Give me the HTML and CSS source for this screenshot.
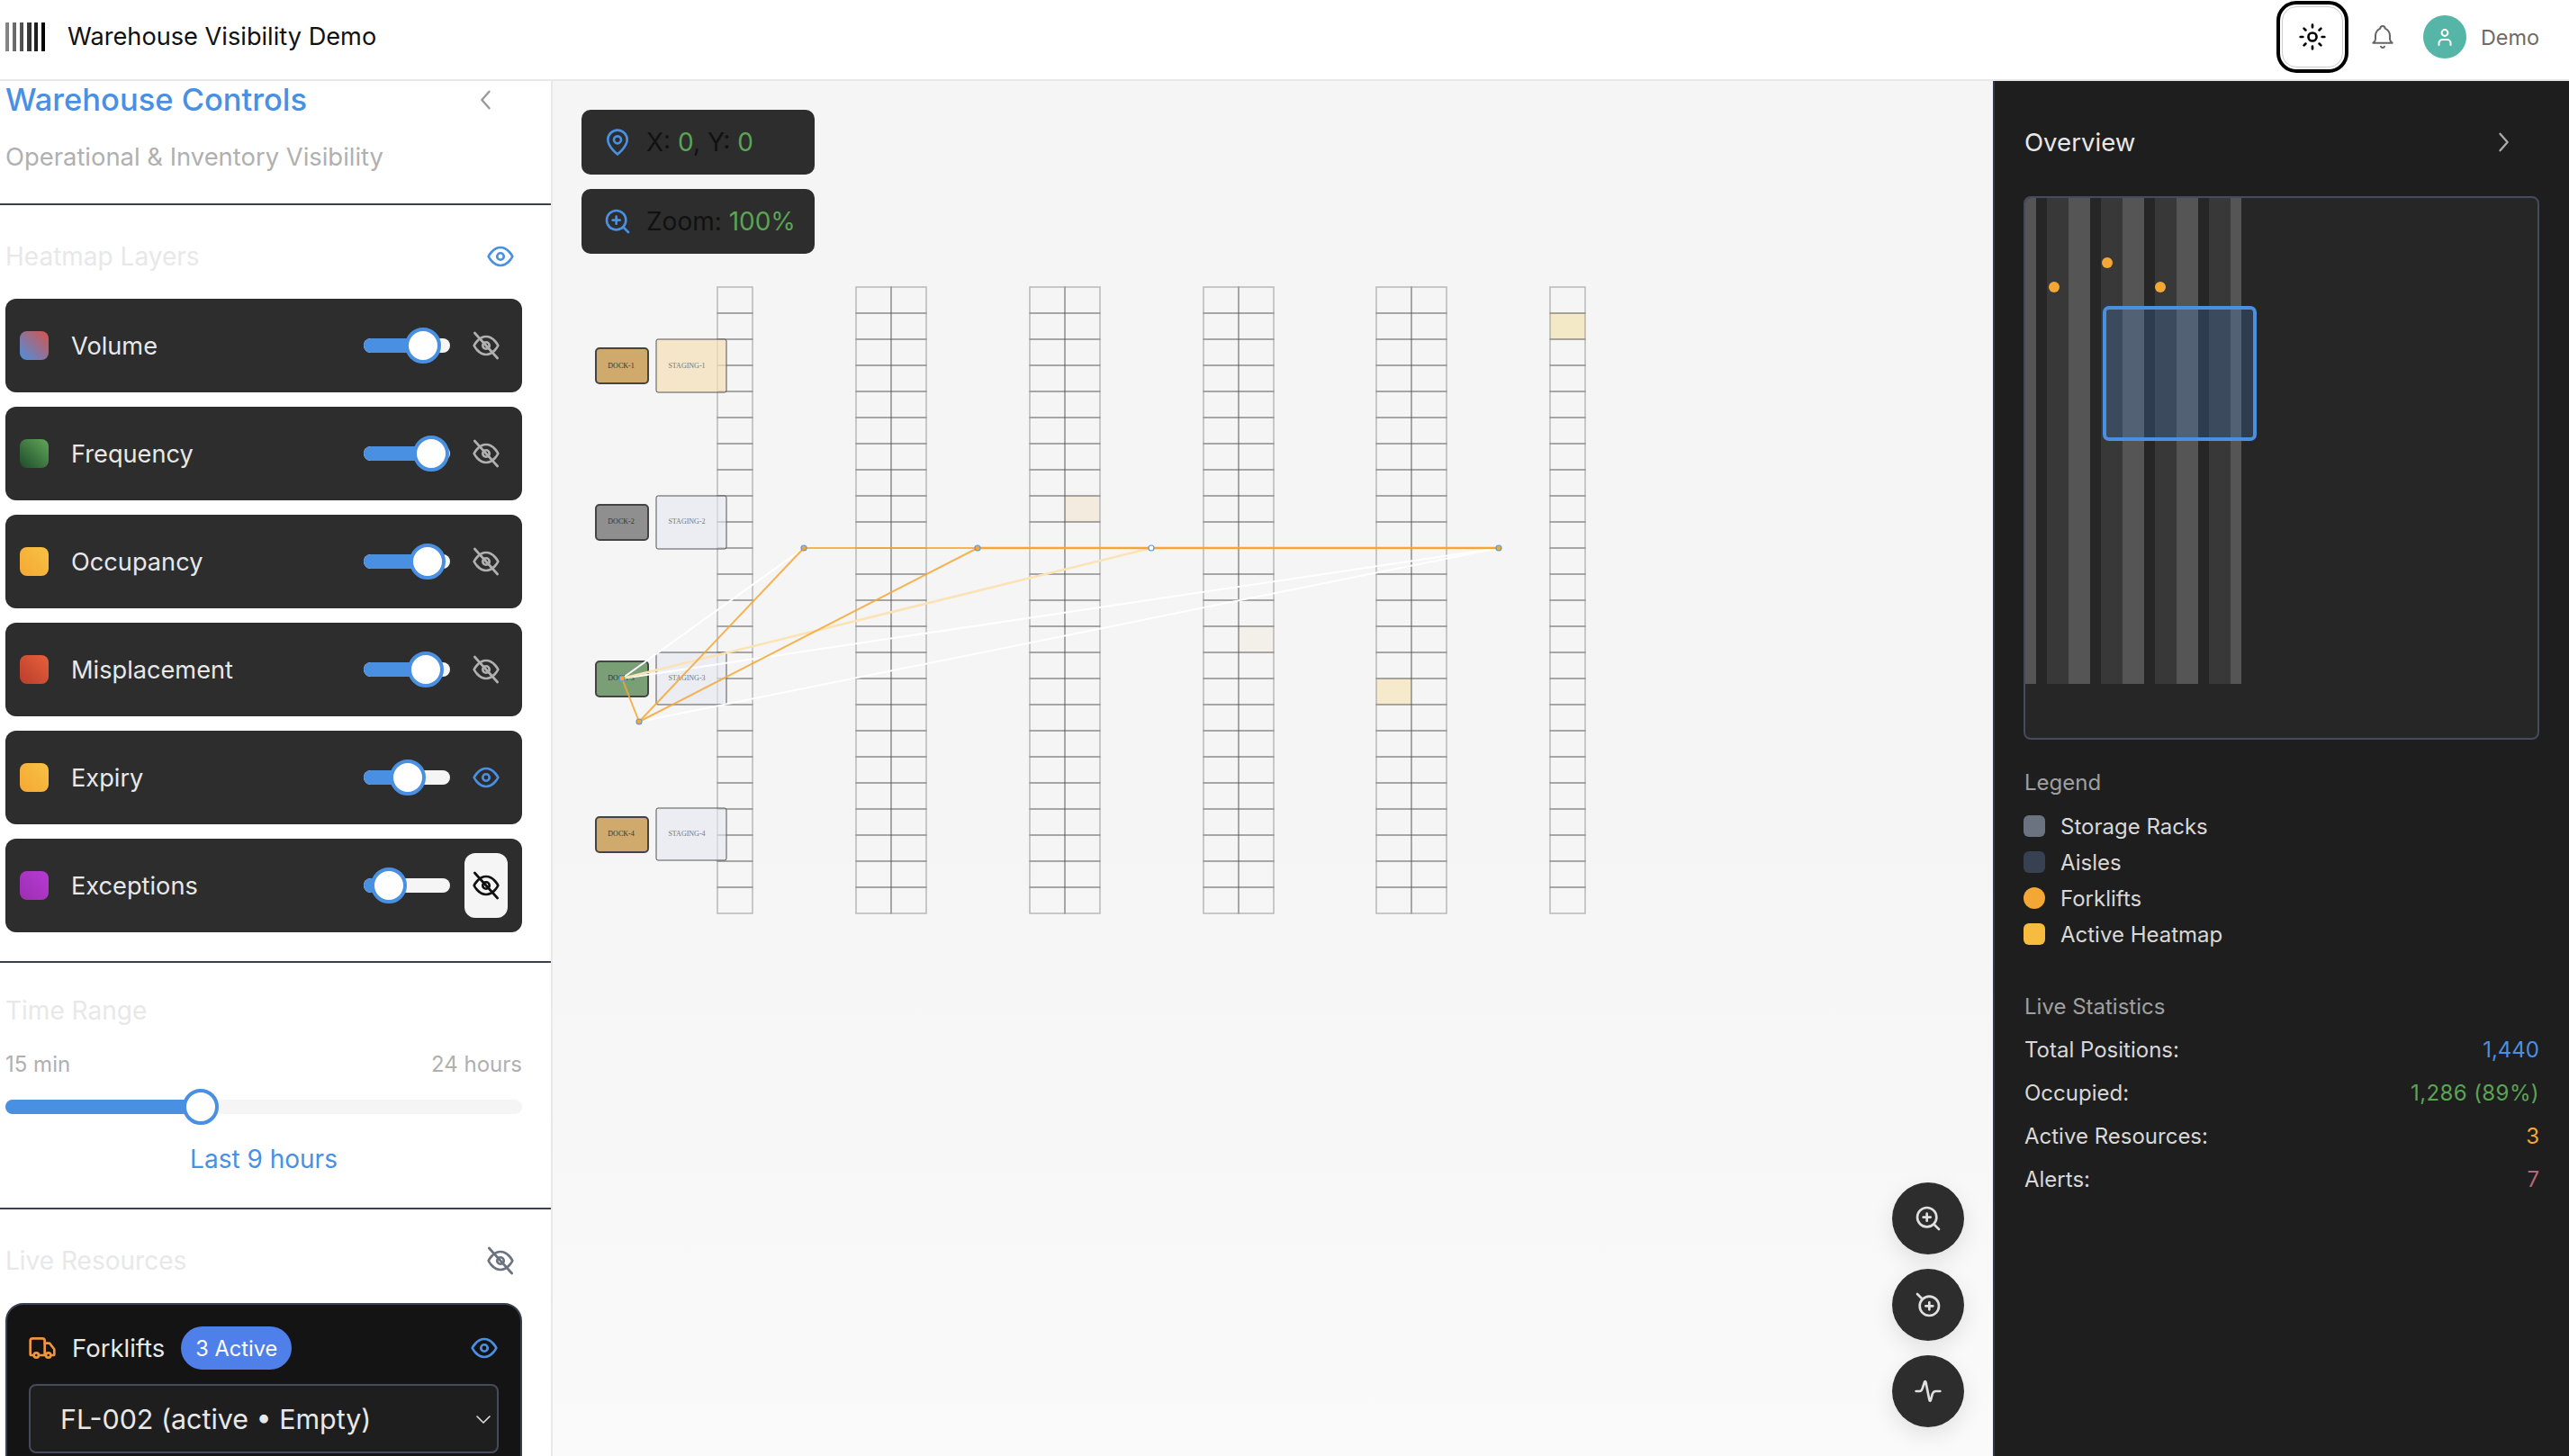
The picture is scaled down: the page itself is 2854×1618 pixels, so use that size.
FILE: index.html
```html
<!DOCTYPE html>
<html lang="en">
  <head>
    <meta charset="UTF-8" />
    <title>Warehouse Visibility Demo</title>
    <link rel="stylesheet" href="styles.css">
  </head>
  <body>
    <svg class="defs" width="0" height="0">
      <defs>
        <g id="eye"><path d="M2 12s3.6-7.5 10-7.5S22 12 22 12s-3.6 7.5-10 7.5S2 12 2 12z"/><circle cx="12" cy="12" r="2.8"/></g>
        <g id="eye-off"><path d="M2 12s3.6-7.5 10-7.5S22 12 22 12s-3.6 7.5-10 7.5S2 12 2 12z"/><circle cx="12" cy="12" r="2.8"/><path d="M2.5 1.5l19 21"/></g>
        <g id="zoom-in"><circle cx="11" cy="11" r="8"/><path d="M21 21l-4.35-4.35M11 8v6M8 11h6"/></g>
      </defs>
    </svg>

    <header class="topbar">
      <svg class="logo" width="44" height="32" viewBox="0 0 44 32">
        <defs>
          <linearGradient id="bars"><stop offset="0" stop-color="#8a8a8a"/><stop offset="1" stop-color="#000"/></linearGradient>
        </defs>
        <path fill="url(#bars)" d="M0 0h4v32H0zM8 0h4v32H8zM16 0h4v32h-4zM24 0h5v32h-5zM32 0h4v32h-4zM40 0h4v32h-4z"/>
      </svg>
      <div class="app-title">Warehouse Visibility Demo</div>
      <div class="top-actions">
        <button class="theme-btn">
          <svg class="icon" viewBox="0 0 24 24"><circle cx="12" cy="12" r="3.4"/><path d="M12 2v2M12 20v2M4.93 4.93l1.41 1.41M17.66 17.66l1.41 1.41M2 12h2M20 12h2M6.34 17.66l-1.41 1.41M19.07 4.93l-1.41 1.41"/></svg>
        </button>
        <svg class="icon bell" viewBox="0 0 24 24"><path d="M10 5a2 2 0 1 1 4 0a7 7 0 0 1 4 6v3a4 4 0 0 0 2 3h-16a4 4 0 0 0 2 -3v-3a7 7 0 0 1 4 -6"/><path d="M10.5 20a1.6 1.6 0 0 0 3 0"/></svg>
        <div class="avatar">
          <svg class="icon" viewBox="0 0 24 24"><circle cx="12" cy="7.5" r="3.4"/><path d="M5.5 21v-2a4 4 0 0 1 4-4h5a4 4 0 0 1 4 4v2"/></svg>
        </div>
        <span class="user-name">Demo</span>
      </div>
    </header>

    <main class="layout">
      <aside class="sidebar">
        <div class="side-head">
          <div class="side-title-row">
            <h1 class="side-title">Warehouse Controls</h1>
            <svg class="icon collapse" viewBox="0 0 24 24"><path d="M15 4l-7 8 7 8"/></svg>
          </div>
          <p class="side-sub">Operational &amp; Inventory Visibility</p>
        </div>

        <section class="section layers">
          <div class="section-head">
            <h2>Heatmap Layers</h2>
            <svg class="icon blue" viewBox="0 0 24 24"><use href="#eye"/></svg>
          </div>
          <div class="layer-list">
            <div class="layer">
              <span class="swatch volume"></span><span class="layer-name">Volume</span>
              <div class="slider small"><div class="fill" style="width: 66px"><span class="thumb"></span></div></div>
              <span class="eye-btn"><svg class="icon muted" viewBox="0 0 24 24"><use href="#eye-off"/></svg></span>
            </div>
            <div class="layer">
              <span class="swatch frequency"></span><span class="layer-name">Frequency</span>
              <div class="slider small"><div class="fill" style="width: 75px"><span class="thumb"></span></div></div>
              <span class="eye-btn"><svg class="icon muted" viewBox="0 0 24 24"><use href="#eye-off"/></svg></span>
            </div>
            <div class="layer">
              <span class="swatch occupancy"></span><span class="layer-name">Occupancy</span>
              <div class="slider small"><div class="fill" style="width: 71px"><span class="thumb"></span></div></div>
              <span class="eye-btn"><svg class="icon muted" viewBox="0 0 24 24"><use href="#eye-off"/></svg></span>
            </div>
            <div class="layer">
              <span class="swatch misplacement"></span><span class="layer-name">Misplacement</span>
              <div class="slider small"><div class="fill" style="width: 69px"><span class="thumb"></span></div></div>
              <span class="eye-btn"><svg class="icon muted" viewBox="0 0 24 24"><use href="#eye-off"/></svg></span>
            </div>
            <div class="layer">
              <span class="swatch occupancy"></span><span class="layer-name">Expiry</span>
              <div class="slider small"><div class="fill" style="width: 49px"><span class="thumb"></span></div></div>
              <span class="eye-btn"><svg class="icon blue" viewBox="0 0 24 24"><use href="#eye"/></svg></span>
            </div>
            <div class="layer">
              <span class="swatch exceptions"></span><span class="layer-name">Exceptions</span>
              <div class="slider small"><div class="fill" style="width: 28px"><span class="thumb"></span></div></div>
              <span class="eye-btn hovered"><svg class="icon" viewBox="0 0 24 24"><use href="#eye-off"/></svg></span>
            </div>
          </div>
        </section>

        <section class="section time">
          <h2>Time Range</h2>
          <div class="range-labels"><span>15 min</span><span>24 hours</span></div>
          <div class="slider"><div class="fill" style="width: 217px"><span class="thumb"></span></div></div>
          <div class="range-value">Last 9 hours</div>
        </section>

        <section class="section live">
          <div class="section-head">
            <h2>Live Resources</h2>
            <svg class="icon grey" viewBox="0 0 24 24"><use href="#eye-off"/></svg>
          </div>
          <div class="resource">
            <div class="resource-head">
              <svg class="icon truck" viewBox="0 0 24 24"><path d="M14 18V6a2 2 0 0 0-2-2H4a2 2 0 0 0-2 2v11a1 1 0 0 0 1 1h2"/><path d="M15 18H9"/><path d="M19 18h2a1 1 0 0 0 1-1v-3.65a1 1 0 0 0-.22-.624l-3.48-4.35A1 1 0 0 0 17.52 8H14"/><circle cx="17" cy="18" r="2"/><circle cx="7" cy="18" r="2"/></svg>
              <span class="resource-name">Forklifts</span>
              <span class="badge">3 Active</span>
              <svg class="icon blue resource-eye" viewBox="0 0 24 24"><use href="#eye"/></svg>
            </div>
            <div class="select">
              <span>FL-002 (active • Empty)</span>
              <svg class="icon chevron" viewBox="0 0 24 24"><path d="M5 9l7 7 7-7"/></svg>
            </div>
          </div>
        </section>
      </aside>

      <div class="canvas">
        <svg class="plan" width="1600" height="1528" viewBox="614 90 1600 1528">
          <defs>
            <rect id="cell" width="39" height="29"/>
            <g id="cells4"><use href="#cell"/><use href="#cell" y="29"/><use href="#cell" y="58"/><use href="#cell" y="87"/></g>
            <g id="col"><use href="#cells4"/><use href="#cells4" y="116"/><use href="#cells4" y="232"/><use href="#cells4" y="348"/><use href="#cells4" y="464"/><use href="#cells4" y="580"/></g>
          </defs>

          <g class="heat">
            <rect x="1183" y="551" width="39" height="29" fill="#f3ebdd"/>
            <rect x="1376" y="696" width="39" height="29" fill="#f3efe9"/>
            <rect x="1529" y="754" width="39" height="29" fill="#f5ebcc"/>
            <rect x="1722" y="348" width="39" height="29" fill="#f3e9c6"/>
          </g>

          <g class="racks">
            <use href="#col" x="797" y="319"/>
            <use href="#col" x="951" y="319"/><use href="#col" x="990" y="319"/>
            <use href="#col" x="1144" y="319"/><use href="#col" x="1183" y="319"/>
            <use href="#col" x="1337" y="319"/><use href="#col" x="1376" y="319"/>
            <use href="#col" x="1529" y="319"/><use href="#col" x="1568" y="319"/>
            <use href="#col" x="1722" y="319"/>
          </g>

          <g class="stagings">
            <rect x="729" y="377" width="78" height="59" rx="2"/>
            <rect x="729" y="551" width="78" height="59" rx="2"/>
            <rect x="729" y="725" width="78" height="58" rx="2"/>
            <rect x="729" y="898" width="78" height="58" rx="2"/>
          </g>
          <g class="staging-text">
            <text x="763" y="409">STAGING-1</text>
            <text x="763" y="582">STAGING-2</text>
            <text x="763" y="756">STAGING-3</text>
            <text x="763" y="929">STAGING-4</text>
          </g>
          <g class="docks">
            <rect x="662" y="387" width="58" height="39" rx="4" fill="#d0a96c"/>
            <rect x="662" y="561" width="58" height="39" rx="4" fill="#8f8f8f"/>
            <rect x="662" y="735" width="58" height="39" rx="4" fill="#7a9f76"/>
            <rect x="662" y="908" width="58" height="39" rx="4" fill="#d0a96c"/>
          </g>
          <g class="dock-text">
            <text x="690" y="409">DOCK-1</text>
            <text x="690" y="582">DOCK-2</text>
            <text x="690" y="756">DOCK-3</text>
            <text x="690" y="929">DOCK-4</text>
          </g>

          <g class="routes-white">
            <path d="M691 754L893 609"/>
            <path d="M691 754L1665 609"/>
            <path d="M710 802L1665 609"/>
          </g>
          <path class="route-cream" d="M691 754L1279 609"/>
          <g class="routes-orange">
            <path d="M691 754L710 802"/>
            <path d="M710 802L893 609"/>
            <path d="M710 802L1086 609"/>
            <path d="M893 609H1086"/>
            <path class="thick" d="M1086 609H1665"/>
          </g>
          <g class="route-nodes">
            <circle cx="691" cy="754" r="3"/>
            <circle cx="710" cy="802" r="3"/>
            <circle cx="893" cy="609" r="3"/>
            <circle cx="1086" cy="609" r="3"/>
            <circle class="empty" cx="1279" cy="609" r="3"/>
            <circle cx="1665" cy="609" r="3"/>
          </g>
        </svg>

        <div class="readouts">
          <div class="readout">
            <svg class="icon blue" viewBox="0 0 24 24"><path d="M20 10c0 6-8 12-8 12s-8-6-8-12a8 8 0 0 1 16 0Z"/><circle cx="12" cy="10" r="3"/></svg>
            <span>X: <b>0</b>, Y: <b>0</b></span>
          </div>
          <div class="readout">
            <svg class="icon blue" viewBox="0 0 24 24"><use href="#zoom-in"/></svg>
            <span>Zoom: <b>100%</b></span>
          </div>
        </div>

        <div class="fabs">
          <button class="fab"><svg class="icon" viewBox="0 0 24 24"><use href="#zoom-in"/></svg></button>
          <button class="fab"><svg class="icon" viewBox="0 0 24 24"><circle cx="13" cy="13" r="8"/><path d="M3 3l4.35 4.35M13 10v6M10 13h6"/></svg></button>
          <button class="fab"><svg class="icon" viewBox="0 0 24 24"><path d="M2 12h3c1.5 0 2-1 2.5-3L9 4.5c.2-.8.9-.8 1.1 0l3 15c.2.8.9.8 1.1 0l1.3-5C16 13 17 12 18.5 12H22"/></svg></button>
        </div>
      </div>

      <aside class="overview">
        <div class="overview-head">
          <h2>Overview</h2>
          <svg class="icon expand" viewBox="0 0 24 24"><path d="M9 4l7 8-7 8"/></svg>
        </div>
        <div class="minimap">
          <svg width="569" height="600" viewBox="2250 220 569 600">
            <g fill="#555">
              <rect x="2250" y="220" width="12" height="540"/>
              <rect x="2298" y="220" width="24" height="540"/>
              <rect x="2358" y="220" width="24" height="540"/>
              <rect x="2418" y="220" width="24" height="540"/>
              <rect x="2478" y="220" width="12" height="540"/>
            </g>
            <g fill="#383838">
              <rect x="2274" y="220" width="24" height="540"/>
              <rect x="2334" y="220" width="24" height="540"/>
              <rect x="2394" y="220" width="24" height="540"/>
              <rect x="2454" y="220" width="24" height="540"/>
            </g>
            <g fill="#f5a735">
              <circle cx="2282" cy="319" r="6"/>
              <circle cx="2341" cy="292" r="6"/>
              <circle cx="2400" cy="319" r="6"/>
            </g>
            <rect x="2338" y="342" width="167" height="146" rx="5" fill="#4a90e2" fill-opacity="0.22" stroke="#4a90e2" stroke-width="4"/>
          </svg>
        </div>

        <h3 class="panel-label">Legend</h3>
        <ul class="legend">
          <li><span class="key racks-key"></span>Storage Racks</li>
          <li><span class="key aisles-key"></span>Aisles</li>
          <li><span class="key forklift-key"></span>Forklifts</li>
          <li><span class="key heat-key"></span>Active Heatmap</li>
        </ul>

        <h3 class="panel-label stats-label">Live Statistics</h3>
        <ul class="stats">
          <li><span>Total Positions:</span><span class="v-blue">1,440</span></li>
          <li><span>Occupied:</span><span class="v-green">1,286 (89%)</span></li>
          <li><span>Active Resources:</span><span class="v-orange">3</span></li>
          <li><span>Alerts:</span><span class="v-red">7</span></li>
        </ul>
      </aside>
    </main>
  </body>
</html>
```

FILE: styles.css
```css
* {
  box-sizing: border-box;
}
html,
body {
  height: 100%;
  margin: 0;
  overflow: hidden;
}
body {
  background: #fff;
  color: #111;
  font-family: Inter, "Liberation Sans", sans-serif;
  display: flex;
  flex-direction: column;
}
h1,
h2,
h3,
p,
ul {
  margin: 0;
  padding: 0;
  font-weight: 400;
}
ul {
  list-style: none;
}
.defs {
  position: absolute;
}
.icon {
  width: 32px;
  height: 32px;
  flex: none;
  fill: none;
  stroke: currentColor;
  stroke-width: 2;
  stroke-linecap: round;
  stroke-linejoin: round;
}
.blue {
  color: #4a90e2;
}
.muted {
  color: #b0b0b0;
}
.grey {
  color: #6b7280;
}

/* top bar */
.topbar {
  height: 90px;
  flex: none;
  display: flex;
  align-items: center;
  padding: 0 33px 6px 6px;
  border-bottom: 2px solid #e8e8e8;
}
.logo {
  flex: none;
}
.app-title {
  margin-left: 25px;
  font-size: 27.2px;
  line-height: 40px;
}
.top-actions {
  margin-left: auto;
  display: flex;
  align-items: center;
}
.theme-btn {
  width: 80px;
  height: 80px;
  padding: 0;
  display: flex;
  align-items: center;
  justify-content: center;
  background: #fff;
  color: #000;
  border: 4px solid #000;
  border-radius: 22px;
  outline: 1px solid #ccc;
  outline-offset: -7px;
}
.bell {
  margin-left: 22px;
  color: #666;
  stroke-width: 1.5;
}
.avatar {
  margin-left: 29px;
  width: 48px;
  height: 48px;
  border-radius: 50%;
  background: #55b5a6;
  color: #fff;
  display: flex;
  align-items: center;
  justify-content: center;
}
.avatar .icon {
  width: 24px;
  height: 24px;
}
.user-name {
  margin-left: 16px;
  color: #6f6a65;
  font-size: 23.4px;
}

/* layout */
.layout {
  flex: 1;
  min-height: 0;
  display: flex;
}
.sidebar {
  width: 614px;
  flex: none;
  border-right: 2px solid #e8e8e8;
  overflow: hidden;
}
.canvas {
  flex: 1;
  position: relative;
  overflow: hidden;
  background: linear-gradient(#f5f5f5 55%, #fafafa);
}
.overview {
  width: 640px;
  flex: none;
  padding: 48px 33px 0 32px;
  background: #1e1e1e;
  border-left: 2px solid #2f3a4c;
  color: #e8e8e8;
}

/* left column */
.side-head {
  height: 138px;
  padding: 0 0 0 6px;
  border-bottom: 2px solid #374151;
}
.side-title-row {
  display: flex;
  align-items: center;
  height: 42px;
  padding-right: 58px;
  justify-content: space-between;
}
.side-title {
  color: #4a90e2;
  font-size: 34.5px;
  font-weight: 500;
  line-height: 42px;
}
.collapse {
  color: #999;
  width: 28px;
  height: 28px;
}
.side-sub {
  margin-top: 24px;
  color: #b0b0b0;
  font-size: 27.4px;
  line-height: 36px;
}
.section {
  padding: 0 32px 0 6px;
  border-bottom: 2px solid #374151;
}
.section h2 {
  color: #e8e8e8;
  font-size: 28px;
  line-height: 40px;
}
.section-head {
  display: flex;
  align-items: center;
  justify-content: space-between;
  height: 40px;
  padding-right: 8px;
}
.layers {
  padding-top: 37px;
  padding-bottom: 32px;
}
.layer-list {
  margin-top: 27px;
  display: flex;
  flex-direction: column;
  gap: 16px;
}
.layer {
  height: 104px;
  display: flex;
  align-items: center;
  padding: 0 16px;
  background: #2d2d2d;
  border-radius: 12px;
}
.swatch {
  width: 32px;
  height: 32px;
  border-radius: 8px;
  flex: none;
}
.volume {
  background: linear-gradient(45deg, #4a90e2, #d9534a);
}
.frequency {
  background: linear-gradient(45deg, #1e4a2a, #62a85a);
}
.occupancy {
  background: linear-gradient(45deg, #f5a735, #f7c244);
}
.misplacement {
  background: linear-gradient(45deg, #b83e2c, #e8603c);
}
.exceptions {
  background: linear-gradient(45deg, #9b2fb0, #b83ad4);
}
.layer-name {
  margin-left: 25px;
  color: #e8e8e8;
  font-size: 27.2px;
}
.slider {
  height: 16px;
  background: #f5f5f5;
  border-radius: 8px;
}
.slider.small {
  width: 96px;
  margin-left: auto;
  margin-right: 16px;
  flex: none;
}
.fill {
  position: relative;
  height: 16px;
  background: #4a90e2;
  border-radius: 8px 0 0 8px;
}
.thumb {
  position: absolute;
  right: -20px;
  top: -12px;
  width: 40px;
  height: 40px;
  border-radius: 50%;
  background: #fff;
  border: 4px solid #4a90e2;
}
.eye-btn {
  width: 48px;
  height: 72px;
  flex: none;
  display: flex;
  align-items: center;
  justify-content: center;
  border-radius: 12px;
}
.eye-btn.hovered {
  background: #f5f5f5;
  color: #111;
}
.time {
  padding-top: 33px;
  height: 274px;
}
.range-labels {
  margin-top: 24px;
  display: flex;
  justify-content: space-between;
  color: #b0b0b0;
  font-size: 24px;
  line-height: 32px;
}
.time .slider {
  margin-top: 23px;
}
.range-value {
  margin-top: 32px;
  text-align: center;
  color: #4a90e2;
  font-size: 28px;
  line-height: 36px;
}
.live {
  padding-top: 37px;
  border-bottom: none;
}
.resource {
  margin-top: 27px;
  height: 260px;
  padding: 24px 24px;
  background: #141414;
  border: 2px solid #374151;
  border-radius: 20px;
}
.resource-head {
  height: 48px;
  display: flex;
  align-items: center;
}
.truck {
  color: #f0953f;
  margin-left: -1px;
}
.resource-name {
  margin-left: 17px;
  color: #e8e8e8;
  font-size: 27.5px;
}
.badge {
  margin-left: 18px;
  height: 48px;
  padding: 0 16px;
  display: flex;
  align-items: center;
  border-radius: 24px;
  background: #4f7fe8;
  color: #fff;
  font-size: 23.6px;
}
.resource-eye {
  margin-left: auto;
}
.select {
  margin-top: 16px;
  height: 77px;
  padding: 0 3px 0 33px;
  display: flex;
  align-items: center;
  justify-content: space-between;
  background: #1e1e1e;
  border: 2px solid #444c5c;
  border-radius: 8px;
  color: #e8e8e8;
  font-size: 30.4px;
}
.chevron {
  width: 24px;
  height: 24px;
  stroke-width: 1.6;
  color: #ddd;
}

/* canvas */
.plan {
  position: absolute;
  left: 0;
  top: 0;
}
.racks use {
  fill: none;
  stroke: #555;
  stroke-opacity: 0.38;
  stroke-width: 1.5;
}
.stagings rect {
  fill: #e4e8f0;
  fill-opacity: 0.6;
  stroke: #555;
  stroke-width: 1;
}
.stagings rect:first-child {
  fill: #f5dfb8;
  fill-opacity: 0.72;
}
.docks rect {
  stroke: #444;
  stroke-width: 2;
}
.staging-text text,
.dock-text text {
  font-family: "Liberation Serif", serif;
  font-size: 8px;
  text-anchor: middle;
}
.staging-text {
  fill: #777;
}
.dock-text {
  fill: #333;
}
.routes-white path {
  fill: none;
  stroke: #fff;
  stroke-width: 2;
}
.route-cream {
  stroke: #fbe3b4;
  stroke-width: 2.5;
  fill: none;
}
.routes-orange path {
  fill: none;
  stroke: #f5a735;
  stroke-opacity: 0.85;
  stroke-width: 2;
}
.routes-orange .thick {
  stroke-opacity: 1;
  stroke-width: 2.5;
}
.route-nodes circle {
  fill: #f5a735;
  stroke: #5b9be0;
  stroke-width: 1.2;
}
.route-nodes .empty {
  fill: #fff;
}
.readouts {
  position: absolute;
  left: 32px;
  top: 32px;
  display: flex;
  flex-direction: column;
  gap: 16px;
}
.readout {
  width: 259px;
  height: 72px;
  padding-left: 24px;
  display: flex;
  align-items: center;
  gap: 16px;
  background: #2d2d2d;
  border-radius: 10px;
  color: #111;
  font-size: 28px;
}
.readout b {
  color: #5aa454;
  font-weight: 400;
}
.fabs {
  position: absolute;
  right: 32px;
  bottom: 32px;
  display: flex;
  flex-direction: column;
  gap: 16px;
}
.fab {
  width: 80px;
  height: 80px;
  padding: 0;
  display: flex;
  align-items: center;
  justify-content: center;
  border: none;
  border-radius: 50%;
  background: #2d2d2d;
  color: #e0e0e0;
  box-shadow: 0 8px 24px rgba(0, 0, 0, 0.1);
}

/* right panel */
.overview-head {
  height: 40px;
  display: flex;
  align-items: center;
  justify-content: space-between;
  padding-right: 26px;
}
.overview-head h2 {
  font-size: 27.6px;
  padding-left: 1px;
}
.expand {
  width: 28px;
  height: 28px;
  color: #aaa;
}
.minimap {
  margin-top: 40px;
  height: 604px;
  background: #262626;
  border: 2px solid #444c5c;
  border-radius: 8px;
  overflow: hidden;
}
.minimap svg {
  display: block;
}
.panel-label {
  margin-top: 32px;
  padding-left: 1px;
  color: #a0a0a0;
  font-size: 24px;
  line-height: 32px;
}
.legend {
  margin-top: 16px;
  display: flex;
  flex-direction: column;
  gap: 8px;
}
.legend li {
  height: 32px;
  display: flex;
  align-items: center;
  font-size: 24px;
  color: #d8d8d8;
}
.key {
  width: 24px;
  height: 24px;
  margin-right: 17px;
  border-radius: 6px;
}
.racks-key {
  background: #6b7280;
}
.aisles-key {
  background: #374151;
}
.forklift-key {
  background: #f5a735;
  border-radius: 50%;
}
.heat-key {
  background: #f7bb40;
}
.stats-label {
  margin-top: 49px;
}
.stats {
  margin-top: 15px;
  display: flex;
  flex-direction: column;
  gap: 16px;
}
.stats li {
  height: 32px;
  padding-left: 1px;
  display: flex;
  align-items: center;
  justify-content: space-between;
  font-size: 24px;
  color: #d8d8d8;
}
.v-blue {
  color: #4a90e2;
}
.v-green {
  color: #5aa454;
  letter-spacing: 0.4px;
}
.v-orange {
  color: #f5a735;
}
.v-red {
  color: #b5677a;
}
```
